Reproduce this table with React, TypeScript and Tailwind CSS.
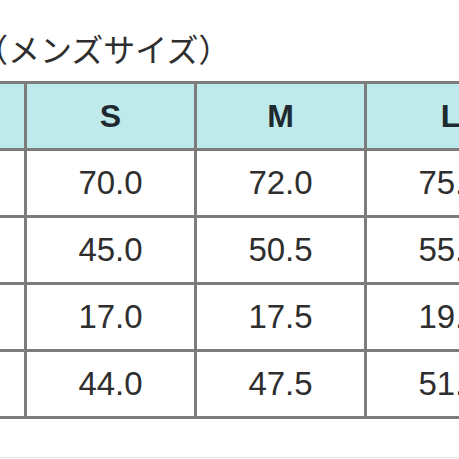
const sizes = ['S', 'M', 'L'];
const rows = [
  { label: '着丈', values: ['70.0', '72.0', '75.0'] },
  { label: '身幅', values: ['45.0', '50.5', '55.0'] },
  { label: '袖丈', values: ['17.0', '17.5', '19.0'] },
  { label: '肩幅', values: ['44.0', '47.5', '51.0'] },
];

export default function App() {
  return (
    <div className="w-[459px] h-[459px] overflow-hidden bg-white relative">
      <div className="h-[81px] pt-[32px]">
        <p
          className="ml-[-24px] whitespace-nowrap text-[32px] leading-none text-[#2e2e2e]"
          style={{ fontFamily: '"Noto Sans CJK JP", "Noto Sans", sans-serif' }}
        >
          （メンズサイズ）
        </p>
      </div>

      <div
        className="ml-[-146px] w-max grid grid-cols-[repeat(4,167px)] auto-rows-[64px] gap-[3px] p-[3px] bg-[#7c7c7c]"
        style={{ fontFamily: '"Liberation Sans", Arial, sans-serif' }}
      >
        <div className="bg-[#bfeaec]" />
        {sizes.map((s) => (
          <div
            key={s}
            className="bg-[#bfeaec] flex items-center justify-center text-[32px] font-bold text-[#1d2a2f]"
          >
            {s}
          </div>
        ))}
        {rows.map((r) => (
          <>
            <div
              key={r.label}
              className="bg-white flex items-center justify-center text-[28px] text-[#2e2e2e]"
              style={{ fontFamily: '"Noto Sans CJK JP", sans-serif' }}
            >
              {r.label}
            </div>
            {r.values.map((v, i) => (
              <div
                key={r.label + i}
                className="bg-white flex items-center justify-center text-[33px] text-[#2e2e2e]"
              >
                {v}
              </div>
            ))}
          </>
        ))}
      </div>

      <div className="absolute left-0 right-0 top-[457px] h-px bg-[#e6e6e6]" />
    </div>
  );
}
